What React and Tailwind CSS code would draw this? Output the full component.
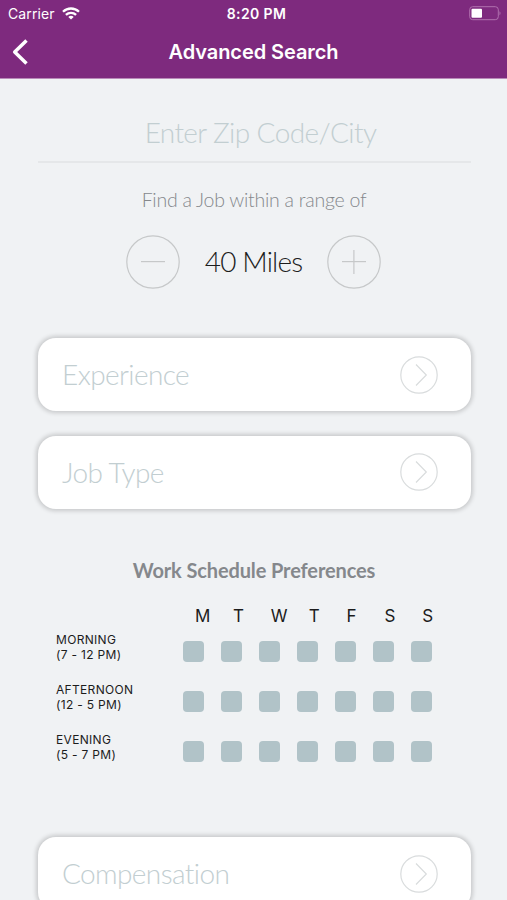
import React from "react";

const DAYS = ["M", "T", "W", "T", "F", "S", "S"];

const SHIFTS = [
    { name: "MORNING", hours: "(7 - 12 PM)" },
    { name: "AFTERNOON", hours: "(12 - 5 PM)" },
    { name: "EVENING", hours: "(5 - 7 PM)" },
];

/* ---------- Status bar ---------- */
const StatusBar = () => (
    <div className="grid h-[27px] grid-cols-3 items-center pl-2 pr-[6px]">
        <div className="flex items-center gap-[7px]">
            <span className="text-[14px] leading-[20px] tracking-[0.1px]">Carrier</span>
            <svg className="h-[13px] w-[18px]" viewBox="0 0 18 13" fill="none" stroke="currentColor" strokeWidth="2.3">
                <path d="M1 4.8C5.5 0.4 12.5 0.4 17 4.8" />
                <path d="M3.9 7.9C6.8 5.1 11.2 5.1 14.1 7.9" />
                <path d="M9 12.6L6.3 9.9C7.8 8.5 10.2 8.5 11.7 9.9Z" fill="currentColor" stroke="none" />
            </svg>
        </div>
        <span className="pl-1 text-center text-[14px] leading-[20px] font-semibold tracking-[0.4px]">8:20 PM</span>
        <svg className="h-[15px] w-[32px] justify-self-end" viewBox="0 0 32 15" fill="none">
            <rect x="0.7" y="0.7" width="28.6" height="13" rx="3" stroke="#b070ae" strokeWidth="1" />
            <rect x="2.5" y="2.7" width="10.5" height="9" rx="1" fill="#ffffff" />
            <path d="M30.5 5.2C31.8 5.9 31.8 8.5 30.5 9.2Z" fill="#b070ae" />
        </svg>
    </div>
);

/* ---------- Header ---------- */
const Header = () => (
    <header className="h-[79px] shrink-0 border-b border-[#b98ab9] bg-[#7e2a7e] text-white">
        <StatusBar />
        <div className="grid h-[50px] grid-cols-[40px_1fr_40px] items-center">
            <button type="button" className="pl-3" aria-label="Back">
                <svg className="h-[26px] w-[17px]" viewBox="0 0 17 26" fill="none" stroke="currentColor" strokeWidth="3.5">
                    <path d="M14.5 1.5L2.7 13L14.5 24.5" strokeLinejoin="round" />
                </svg>
            </button>
            <h1 className="text-center text-[20px] font-semibold tracking-[-0.08px]">Advanced Search</h1>
        </div>
    </header>
);

/* ---------- Round stepper button ---------- */
const StepButton = ({ plus = false }) => (
    <button type="button" className="h-[54px] w-[54px]" aria-label={plus ? "Increase" : "Decrease"}>
        <svg className="h-full w-full" viewBox="0 0 54 54" fill="none" stroke="#c6c8c9" strokeWidth="1.2">
            <circle cx="27" cy="27" r="26.2" />
            <path d="M15 26.6H39" />
            {plus && <path d="M26.9 15V39" />}
        </svg>
    </button>
);

/* ---------- White option card ---------- */
const OptionCard = ({ label }) => (
    <button
        type="button"
        className="flex h-[73px] w-full shrink-0 items-center justify-between rounded-[18px] bg-white pl-[24px] pr-[33px] shadow-[0_0_4px_2px_rgba(0,0,0,0.17)]"
    >
        <span className="pb-px font-['Lato'] text-[28px] leading-[34px] font-light tracking-[-0.6px] text-[#c2ced1]">
            {label}
        </span>
        <svg className="h-[38px] w-[38px]" viewBox="0 0 38 38" fill="none" stroke="#d9dcdd" strokeWidth="1.2">
            <circle cx="19" cy="19" r="18.2" />
            <path d="M16 8.5L26.3 19L16 29.5" />
        </svg>
    </button>
);

/* ---------- Weekly schedule ---------- */
const Schedule = () => (
    <section className="font-['Inter']">
        <h2 className="pr-px text-center font-['Lato'] text-[20px] leading-[24px] font-bold tracking-[-0.12px] text-[#85888c]">
            Work Schedule Preferences
        </h2>
        <div className="mt-[24px] grid grid-cols-[repeat(7,37.9px)] pl-[157px] text-[17px] leading-[20px] text-[#1c1c1c]">
            {DAYS.map((day, i) => (
                <span key={i}>{day}</span>
            ))}
        </div>
        <div className="mt-[7px]">
            {SHIFTS.map((shift) => (
                <div key={shift.name} className="flex h-[50px] items-start pl-[18px]">
                    <p className="-mt-px w-[127.3px] text-[12px] leading-[15px] tracking-[0.32px] text-[#1c1c1c]">
                        {shift.name}
                        <br />
                        {shift.hours}
                    </p>
                    <div className="mt-2 grid grid-cols-[repeat(7,37.9px)]">
                        {DAYS.map((_, i) => (
                            <span key={i} className="h-[21px] w-[21px] rounded-[4px] bg-[#b1c3c8]" />
                        ))}
                    </div>
                </div>
            ))}
        </div>
    </section>
);

export default function App() {
    return (
        <div className="flex h-[900px] w-[507px] flex-col overflow-hidden bg-[#f0f2f4] font-['Inter',sans-serif]">
            <Header />
            <main className="flex flex-col pl-[38px] pr-[36px] pt-[37px]">
                {/* Location */}
                <div className="h-[47px] border-b-2 border-[#e5e7e9] pl-[12px] text-center font-['Lato'] text-[28px] leading-[32px] font-light tracking-[-0.6px] text-[#c2ced1]">
                    Enter Zip Code/City
                </div>
                <p className="mt-[25px] pr-px text-center font-['Lato'] text-[19.5px] leading-[24px] font-light tracking-[-0.25px] text-[#85888c]">
                    Find a Job within a range of
                </p>

                {/* Range */}
                <div className="mt-[23px] flex items-center justify-between pl-[88px] pr-[90px]">
                    <StepButton />
                    <span className="pb-[2px] font-['Lato'] text-[28px] leading-[34px] font-light tracking-[-0.85px] text-[#1c1c1c]">
                        40 Miles
                    </span>
                    <StepButton plus />
                </div>

                {/* Filters */}
                <div className="mt-[49px] flex flex-col gap-[24.5px]">
                    <OptionCard label="Experience" />
                    <OptionCard label="Job Type" />
                </div>

                <div className="mt-[49px] h-[279.5px]">
                    <Schedule />
                </div>

                <OptionCard label="Compensation" />
            </main>
        </div>
    );
}
